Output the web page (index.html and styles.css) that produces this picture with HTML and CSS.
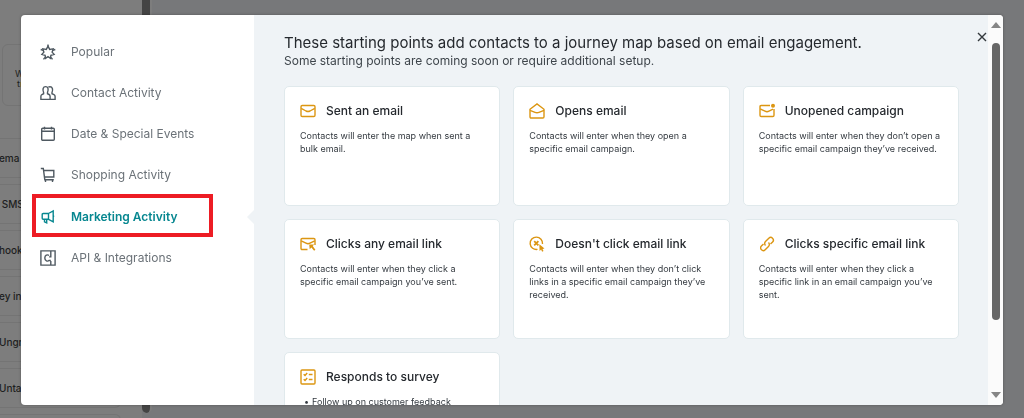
FILE: index.html
```
<!DOCTYPE html>
<html lang="en">
<head>
  <meta charset="UTF-8">
  <meta name="viewport" content="width=device-width, initial-scale=1.0">
  <title>Choose a starting point</title>
  <link rel="stylesheet" href="styles.css">
</head>
<body>
  <!-- Journey builder behind the modal -->
  <div class="builder">
    <div class="builder-panel">
      <div class="builder-tile">
        <span>W</span>
        <span>t<span class="tile-accent">r</span></span>
      </div>
      <div class="builder-rows">
        <div class="builder-row">ema</div>
        <div class="builder-row">&nbsp;SMS</div>
        <div class="builder-row">hook</div>
        <div class="builder-row">ey in</div>
        <div class="builder-row">Ungr</div>
        <div class="builder-row">Untag</div>
        <div class="builder-row"></div>
      </div>
    </div>
    <div class="builder-scroll"></div>
  </div>

  <div class="overlay">
    <div class="modal" role="dialog" aria-labelledby="modal-title">
      <ul class="sidebar">
        <li>
          <button class="nav-item">
            <svg viewBox="0 0 16 16"><path d="M8 2.200l1.700 3.200 3.500-.5-1.100 3.300 2 2.200-3.200 1-.5 3L8 12.700l-2.400 1.700-.5-3-3.200-1 2-2.200-1.100-3.300 3.500.5z"/><path d="M8 .5v2M15.300 5.500l-2.500.8M.7 5.500l2.500.8M3.500 15.300l1.500-2M12.500 15.300l-1.500-2"/></svg>
            Popular
          </button>
        </li>
        <li>
          <button class="nav-item">
            <svg viewBox="0 0 16 16"><path d="M3.600 7.500C2.300 4.500 3 1.600 5.600 1.600c2.500 0 3.200 2.900 1.900 5.900v1.200l1.600.8c.8.4 1 1 1 2v2.900H.9v-2.900c0-1 .3-1.600 1-2l1.700-.8z"/><path d="M8.300 2.300c.5-.4 1-.6 1.700-.6 2.400 0 3.300 2.800 2 5.800v1.200l2 .9c.8.4 1.100 1 1.100 2v2.800h-5"/></svg>
            Contact Activity
          </button>
        </li>
        <li>
          <button class="nav-item">
            <svg viewBox="0 0 16 16"><rect x="1.700" y="2.300" width="12.600" height="12" rx="1"/><path d="M1.700 5.300h12.600M4.500.8v2.700M11.500.8v2.700"/></svg>
            Date &amp; Special Events
          </button>
        </li>
        <li>
          <button class="nav-item">
            <svg viewBox="0 0 16 16"><path d="M.8 1.500h2.500l1.500 11.200h9M3.700 3.500h10.100V10H4.500"/><path d="M5.500 13v2M12.500 13v2"/></svg>
            Shopping Activity
          </button>
        </li>
        <li class="current">
          <button class="nav-item active">
            <svg viewBox="0 0 16 16"><path d="M8.500 4.500H3.200c-.8 0-1 .3-1 1v3.800c0 .7.3 1 1 1h5.300zM8.500 4.500l4.700-2.500v10.800l-4.700-2.500zM4.500 10.300v2.500l2.200 1v-3.500M13.200 7.300h1"/></svg>
            Marketing Activity
          </button>
        </li>
        <li>
          <button class="nav-item">
            <svg viewBox="0 0 16 16"><path d="M10.800.9H.9v14.200h9.900V11M10.800.9h4.300v14.200h-4.300M10.800.9v6h-1.700"/><path d="M9 5.500C7.700 4.300 4.800 5 4.800 8s2.900 3.700 4.200 2.500h1.800"/></svg>
            API &amp; Integrations
          </button>
        </li>
      </ul>

      <div class="content">
        <button class="close-btn" aria-label="Close">
          <svg viewBox="0 0 10 10"><path d="M1 1l8 8M9 1L1 9"/></svg>
        </button>
        <h1 id="modal-title">These starting points add contacts to a journey map based on email engagement.</h1>
        <p class="subtitle">Some starting points are coming soon or require additional setup.</p>

        <div class="card-grid">
          <a class="card" href="#">
            <h2>
              <svg viewBox="0 0 16 16"><rect x="1" y="2.500" width="14" height="11" rx="1.200"/><path d="M1.200 5.300L6 8q2 1 4 0l4.800-2.700"/></svg>
              Sent an email
            </h2>
            <p>Contacts will enter the map when sent a bulk email.</p>
          </a>
          <a class="card" href="#">
            <h2>
              <svg viewBox="0 0 16 16"><path d="M1 6.300L8 1l7 5.300v7.500c0 .8-.3 1.200-1.200 1.200H2.200C1.300 15 1 14.600 1 13.800z"/><path d="M1 7.300l5 2.100q2 .8 4 0l5-2.100"/></svg>
              Opens email
            </h2>
            <p>Contacts will enter when they open a specific email campaign.</p>
          </a>
          <a class="card" href="#">
            <h2>
              <svg viewBox="0 0 16 16"><path d="M11 2.500H2.200C1.300 2.500 1 2.900 1 3.700v8.600c0 .8.300 1.200 1.200 1.200h11.600c.9 0 1.200-.4 1.200-1.200V6"/><path d="M1.200 5.800L6 8.200q2 1 4 0l4-2"/><circle class="solid" cx="14" cy="2.700" r="2"/></svg>
              Unopened campaign
            </h2>
            <p>Contacts will enter when they don’t open a specific email campaign they’ve received.</p>
          </a>
          <a class="card" href="#">
            <h2>
              <svg viewBox="0 0 16 16"><path d="M7.500 13.500H2.200c-.9 0-1.200-.4-1.200-1.200V3.700c0-.8.300-1.200 1.200-1.200h11.600c.9 0 1.200.4 1.200 1.200V9"/><path d="M1.200 4.800L6 7.200q2 1 4 0l4.800-2.400"/><path class="solid" d="M9.200 8.500h5l-1.500 1.600 2.700 3.700-1.300 1-2.700-3.400-1.700 1.800z"/></svg>
              Clicks any email link
            </h2>
            <p>Contacts will enter when they click a specific email campaign you’ve sent.</p>
          </a>
          <a class="card" href="#">
            <h2>
              <svg viewBox="0 0 16 16"><path d="M8.500 13.400A6.200 6.200 0 1 1 13.500 8"/><path class="heavy" d="M5.200 5.200l4.200 4.200M9.400 5.200L5.200 9.400"/><path class="solid" d="M10.300 8.300l5.200 4.300-2 .3 1 2.200-1.400.7-1-2.200-1.500 1.300z"/></svg>
              Doesn't click email link
            </h2>
            <p>Contacts will enter when they don’t click links in a specific email campaign they’ve received.</p>
          </a>
          <a class="card" href="#">
            <h2>
              <svg viewBox="0 0 16 16"><path d="M6.500 9.500C5.300 8.300 5.400 6.700 6.500 5.600L9.800 2.300c1.200-1.200 2.600-1.200 3.700-.1s1.200 2.600.1 3.700L11.500 8"/><path d="M9.500 6.500c1.200 1.200 1.100 2.800 0 3.900l-3.300 3.300c-1.200 1.200-2.600 1.200-3.700.1s-1.200-2.600-.1-3.700L4.500 8"/></svg>
              Clicks specific email link
            </h2>
            <p>Contacts will enter when they click a specific link in an email campaign you’ve sent.</p>
          </a>
          <a class="card" href="#">
            <h2>
              <svg viewBox="0 0 16 16"><rect x="1" y="1" width="14" height="14" rx="1"/><path d="M3.700 5.300l1.300 1.200 2.200-2.500M8.800 5.500h3.700M3.700 10.300L5 11.500 7.200 9M8.800 10.500h3.700"/></svg>
              Responds to survey
            </h2>
            <ul>
              <li>Follow up on customer feedback</li>
            </ul>
          </a>
        </div>
      </div>

      <div class="scrollbar">
        <svg viewBox="0 0 10 6"><path d="M5 0l5 6H0z"/></svg>
        <div class="scroll-track"><div class="scroll-thumb"></div></div>
        <svg viewBox="0 0 10 6"><path d="M5 6l5-6H0z"/></svg>
      </div>
    </div>
  </div>
</body>
</html>
```
FILE: styles.css
```
:root {
  --text-color: #25292e;
  --muted-color: #6b7278;
  --teal: #078790;
  --orange: #dc9612;
  --panel-color: #eff3f6;
  --border-color: #e0e9ec;
}

* {
  box-sizing: border-box;
  margin: 0;
  padding: 0;
}

body {
  font-family: Inter, "Liberation Sans", sans-serif;
  background-color: #77787a;
  color: var(--text-color);
  height: 100vh;
  overflow: hidden;
}

button {
  font-family: inherit;
  border: none;
  background: none;
  cursor: pointer;
}

svg {
  display: block;
  flex: none;
  fill: none;
  stroke: currentColor;
}

ul {
  list-style: none;
}

/* Page behind */
.builder {
  display: flex;
  height: 100vh;
  overflow: hidden;
}

.builder-panel {
  width: 142px;
  padding: 44px 21px 0 0;
  background-color: #7d7d7d;
}

.builder-tile {
  display: flex;
  flex-direction: column;
  justify-content: center;
  width: 62px;
  height: 62px;
  margin: 0 0 32px 2px;
  padding: 8px 12px 0;
  border: 1px solid #747474;
  border-radius: 6px;
  font-size: 9px;
  line-height: 10px;
  color: #1d1f21;
}

.builder-tile > span + span {
  padding-left: 2px;
}

.tile-accent {
  color: #b0632a;
}

.builder-rows {
  display: flex;
  flex-direction: column;
  gap: 6px;
}

.builder-row {
  height: 40px;
  border: 1px solid #747474;
  border-left: none;
  border-radius: 0 6px 6px 0;
  font-size: 10px;
  font-weight: 500;
  line-height: 38px;
  text-indent: -1px;
  color: #1d1f21;
}

.builder-scroll {
  width: 10px;
  height: calc(100vh - 5px);
  border-right: 2px solid #7d7d7d;
  border-radius: 0 0 5px 5px;
  background-color: #444;
}

/* Modal */
.overlay {
  position: fixed;
  inset: 0;
  padding: 15px 21px 13px;
}

.modal {
  display: flex;
  height: 100%;
  border-radius: 4px;
  background-color: #fff;
  box-shadow: 0 0 3px rgba(0, 0, 0, 0.3);
  overflow: hidden;
}

.sidebar {
  flex: 0 0 233px;
  padding-top: 16px;
}

.sidebar li {
  padding: 0 41px 0 11px;
}

.sidebar .current {
  position: relative;
  margin-top: -1px;
}

/* notch pointing at the selected item */
.sidebar .current::after {
  content: "";
  position: absolute;
  right: 0;
  top: 16px;
  border: 7px solid transparent;
  border-left-width: 0;
  border-right-color: var(--panel-color);
}

.nav-item {
  display: flex;
  align-items: center;
  gap: 15px;
  width: 100%;
  height: 41px;
  padding: 0 8px;
  font-size: 12px;
  color: var(--muted-color);
}

.nav-item svg {
  width: 16px;
  height: 16px;
  stroke-width: 1.4;
  color: #4f5961;
}

.nav-item.active {
  height: 43px;
  padding: 2px 4px 0;
  border: 4px solid #ed1c24;
  color: var(--teal);
  font-weight: 600;
}

.nav-item.active svg {
  color: var(--teal);
}

.content {
  position: relative;
  flex: 1;
  padding: 18px 29px 0 30px;
  background-color: var(--panel-color);
  overflow: hidden;
}

.close-btn {
  position: absolute;
  top: 17px;
  right: 1px;
  padding: 0;
}

.close-btn svg {
  width: 10px;
  height: 10px;
  stroke-width: 1.4;
  color: #33383c;
}

h1 {
  font-size: 15px;
  font-weight: 400;
  line-height: 20px;
}

.subtitle {
  margin-bottom: 17px;
  font-size: 12px;
  line-height: 16px;
  color: #3e454b;
}

.card-grid {
  display: grid;
  grid-template-columns: repeat(3, 1fr);
  gap: 13px;
}

.card {
  min-height: 120px;
  padding: 15px;
  border: 1px solid var(--border-color);
  border-radius: 5px;
  background-color: #fff;
  color: inherit;
  text-decoration: none;
}

.card h2 {
  display: flex;
  align-items: center;
  gap: 10px;
  margin-bottom: 9px;
  font-size: 12px;
  font-weight: 500;
  line-height: 18px;
}

.card svg {
  width: 16px;
  height: 16px;
  stroke-width: 1.4;
  color: var(--orange);
}

.card .solid {
  fill: currentColor;
  stroke: none;
}

.card .heavy {
  stroke-width: 1.8;
}

.card p,
.card li {
  font-size: 9px;
  line-height: 13px;
  color: #343a40;
}

.card li {
  display: flex;
  gap: 3px;
  padding-left: 4px;
}

.card li::before {
  content: "•";
}

/* Scrollbar */
.scrollbar {
  display: flex;
  flex-direction: column;
  align-items: center;
  flex: 0 0 15px;
  padding: 7px 0;
  background-color: #fbfbfb;
}

.scrollbar svg {
  width: 10px;
  height: 6px;
  fill: #858585;
  stroke: none;
}

.scroll-track {
  flex: 1;
  width: 8px;
  padding: 15px 0;
}

.scroll-thumb {
  height: 83%;
  border-radius: 4px;
  background-color: #666;
}
```
